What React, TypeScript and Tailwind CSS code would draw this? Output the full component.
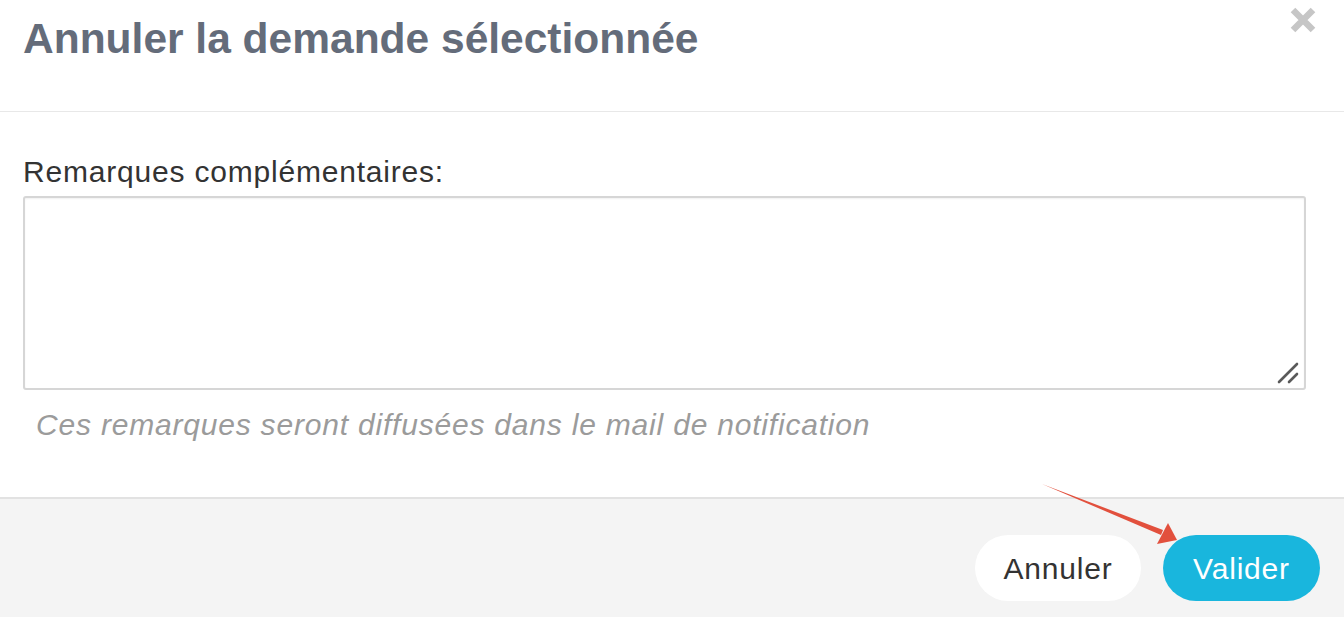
import React from "react";

const font = { fontFamily: '"Liberation Sans", Arial, sans-serif' };

function CloseIcon() {
  return (
    <svg width="28" height="28" viewBox="0 0 28 28" className="block">
      <path d="M4 4 L24 24 M24 4 L4 24" stroke="#c6c6c6" strokeWidth="6.5" strokeLinecap="butt" />
    </svg>
  );
}

function ResizeGrip() {
  return (
    <svg width="24" height="24" viewBox="0 0 24 24" className="block">
      <path d="M3 21 L21 3 M13 21 L21 13" stroke="#5a5a5a" strokeWidth="2.6" strokeLinecap="round" />
    </svg>
  );
}

// red annotation arrow pointing at the submit button
function Arrow() {
  return (
    <svg width="160" height="80" viewBox="0 0 160 80" className="block">
      <path d="M1 1 L122 47 L120 52 Z" fill="#e2503d" />
      <path d="M136 57 L127 40 L116 61 Z" fill="#e2503d" />
    </svg>
  );
}

export default function App() {
  return (
    <div className="relative w-[1344px] h-[617px] bg-white overflow-hidden" style={font}>
      {/* Header */}
      <div className="h-[112px] border-b border-[#e8e8e8] px-[23px] pt-[14px] flex justify-between">
        <h1 className="text-[42.5px] leading-[50px] font-bold text-[#646c7a]">
          Annuler la demande sélectionnée
        </h1>
        <button className="mt-[-8px] mr-[4px] h-[28px]">
          <CloseIcon />
        </button>
      </div>

      {/* Body */}
      <div className="h-[385px] px-[23px] pt-[43px] pr-[38px]">
        <label className="block text-[30px] leading-[34px] tracking-[0.8px] text-[#333333]">
          Remarques complémentaires:
        </label>
        <div className="relative mt-[7px]">
          <textarea className="block w-full h-[194px] resize-none rounded-[3px] border-2 border-[#d6d6d6] bg-white shadow-[inset_0_1px_2px_rgba(0,0,0,0.06)] outline-none" />
          <div className="absolute right-[6px] bottom-[5px]">
            <ResizeGrip />
          </div>
        </div>
        <p className="mt-[18px] ml-[13px] text-[30px] leading-[34px] italic tracking-[0.8px] text-[#9b9b9b]">
          Ces remarques seront diffusées dans le mail de notification
        </p>
      </div>

      {/* Footer */}
      <div className="h-[120px] border-t-2 border-[#e2e2e2] bg-[#f4f4f4] pt-[36px] pr-[24px] flex justify-end gap-[22px]">
        <button className="w-[166px] h-[66px] rounded-full bg-white text-[30px] tracking-[0.8px] text-[#333333]">
          Annuler
        </button>
        <button className="w-[157px] h-[66px] rounded-full bg-[#19b6dd] text-[30px] tracking-[0.8px] text-white">
          Valider
        </button>
      </div>

      <div className="absolute left-[1041px] top-[483px]">
        <Arrow />
      </div>
    </div>
  );
}
